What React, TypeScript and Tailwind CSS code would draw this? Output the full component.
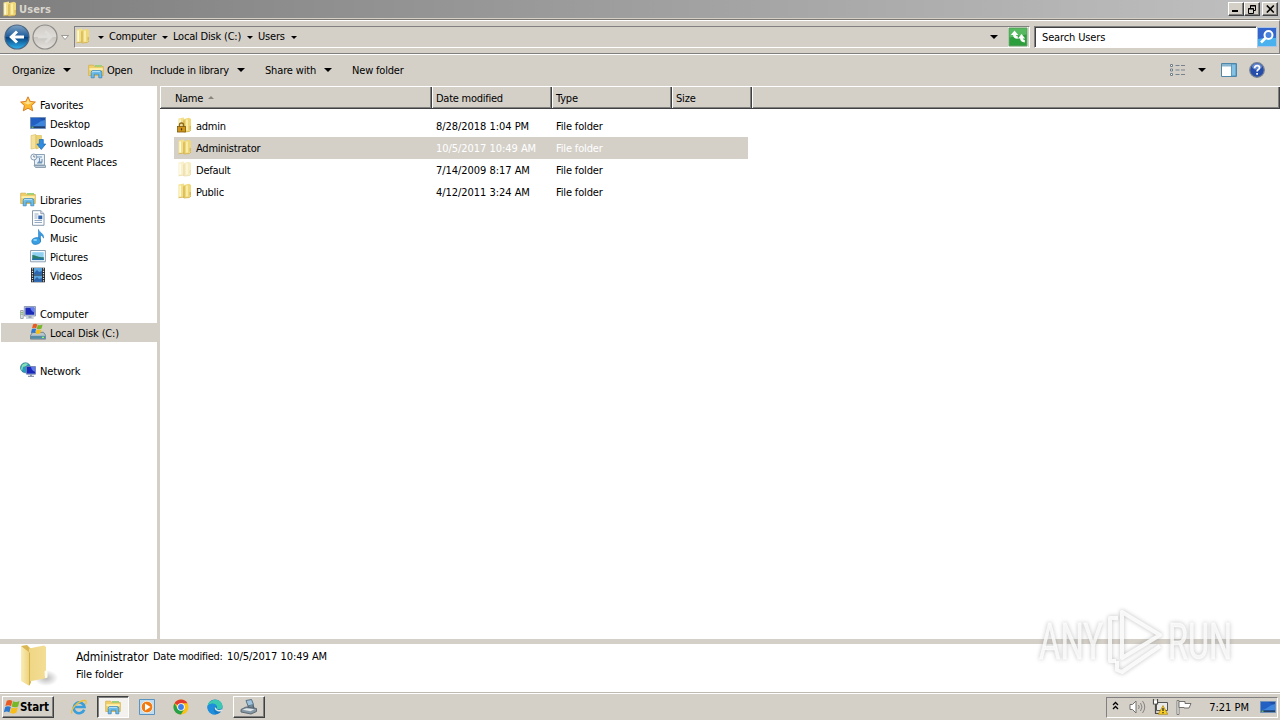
import React from 'react'
import clsx from 'clsx'

interface IconProps {
  className?: string
}

function Folder({ className }: IconProps) {
  return (
    <svg viewBox="0 0 16 16" className={clsx('h-4 w-4 shrink-0', className)}>
      <path d="M1.500 1.500 7 .5V14l-5.500.8z" fill="#f3e08f" />
      <path d="M6 2.200 12 .8l2 1.200v11L12.500 14.500 6 15z" fill="#eed879" />
      <path d="M6.200 3.500 7.700 3V14.500l-1.500.7z" fill="#d9b955" />
      <path d="M3.200 2.400v11" stroke="#fffad6" strokeWidth="1.600" />
      <path d="M10 2.600v11" stroke="#f9eba8" strokeWidth="2" />
      <path d="M1.500 14.800 7 14M7 15l5.500-.5 1.500-1.500" fill="none" stroke="#d2b04e" strokeWidth=".8" />
      <path d="M13.200 9v3.500" stroke="#cfac4a" strokeWidth="1" />
    </svg>
  )
}

function LockedFolder() {
  return (
    <span className="relative h-4 w-4 shrink-0">
      <Folder />
      <svg viewBox="0 0 16 16" className="absolute inset-0 h-4 w-4">
        <path d="M2.500 10V8a2 2 0 0 1 4 0v2" fill="none" stroke="#8c6b1c" strokeWidth="1.400" />
        <rect x=".5" y="9.500" width="8" height="5.500" fill="#cf951c" stroke="#7d5a10" strokeWidth=".8" />
        <path d="M4.500 11.300v2" stroke="#4a3408" strokeWidth="1.200" />
      </svg>
    </span>
  )
}

function Star() {
  return (
    <svg viewBox="0 0 16 16" className="h-4 w-4 shrink-0">
      <path
        d="M8 .8 10.2 5.4 15.4 6 11.6 9.5 12.7 14.8 8 12.2 3.3 14.8 4.4 9.5.6 6 5.8 5.4z"
        fill="#fbb930"
        stroke="#d6751b"
        strokeWidth=".9"
      />
      <path d="M8 2.8 9.4 6.2 13 6.6 8 8.5 3 6.6 6.6 6.2z" fill="#ffe391" />
    </svg>
  )
}

function Desktop({ className }: IconProps) {
  return (
    <svg viewBox="0 0 16 16" className={clsx('h-4 w-4 shrink-0', className)}>
      <path d="M.5 2.5h15v11H.5z" fill="#2260c4" stroke="#6d8fb8" strokeWidth=".9" />
      <path d="M1 3h7c5 2 6 4 7 4V3z" fill="#1d4fa8" />
      <path d="M1 11C6 11 9 6 15 5v6z" fill="#3d86dc" />
      <path d="M1 11.5h14V13H1z" fill="#274165" />
      <path d="M1.5 12.2h2" stroke="#8ce06a" />
    </svg>
  )
}

function Downloads() {
  return (
    <svg viewBox="0 0 16 16" className="h-4 w-4 shrink-0">
      <path d="M1 1.5 6 .5V14l-5 1z" fill="#f5e29a" stroke="#d8bd68" strokeWidth=".6" />
      <path d="M6 1.5h5.5V13L6 15z" fill="#ecd275" stroke="#d8b85a" strokeWidth=".6" />
      <path d="M9.3 5.500h4V10h2.400L11.3 15.500 6.900 10h2.400z" fill="#2f8de0" stroke="#1767b0" strokeWidth=".7" />
    </svg>
  )
}

function RecentPlaces() {
  return (
    <svg viewBox="0 0 16 16" className="h-4 w-4 shrink-0">
      <path d="M4.5 1.5h10v10.5h-10z" fill="#e8f0f7" stroke="#8197ac" strokeWidth=".9" />
      <path d="M4 12.5h11.5v2H5.5z" fill="#c0ced9" stroke="#7890a4" strokeWidth=".8" />
      <path d="M7 4h5M7 10h5M9.5 5v4M12 6v3H8" fill="none" stroke="#7193b5" strokeWidth="1.1" />
      <circle cx="3.8" cy="4" r="3" fill="#f3f7fa" stroke="#7b93ab" strokeWidth=".9" />
      <path d="M3.8 2.3V4h1.5" fill="none" stroke="#506780" strokeWidth=".8" />
    </svg>
  )
}

function LibraryIcon({ className }: IconProps) {
  return (
    <svg viewBox="0 0 16 16" className={clsx('h-4 w-4 shrink-0', className)}>
      <path d="M.7 12.5V2.2h5l1 1.3h8.6v9z" fill="#f0cf68" stroke="#d3b050" strokeWidth=".8" />
      <path d="M7 2h7v1.8H7z" fill="#9bd17a" />
      <path d="M1.5 5.2h13.2v2H1.5z" fill="#fff0b0" />
      <path d="M3.2 14.8V9.5Q3.2 7.6 5 7.6h7q1.8 0 1.8 1.9v5.3h-3v-3.6H6.2v3.6z" fill="#6cbce9" stroke="#3786bd" strokeWidth=".8" />
      <path d="M4 9.4q0-1 1-1h7" fill="none" stroke="#d0efff" strokeWidth=".8" />
    </svg>
  )
}

function DocumentIcon() {
  return (
    <svg viewBox="0 0 16 16" className="h-4 w-4 shrink-0">
      <path d="M2.5.7h8.3l3.2 3v11.6H2.5z" fill="#fdfdfe" stroke="#7b8ea3" strokeWidth=".9" />
      <path d="M10.8.7v3H14" fill="#dbe5ee" stroke="#7b8ea3" strokeWidth=".8" />
      <path d="M4.5 4h4M4.5 6h3M4.5 8h3M4.5 10.5h7.5M4.5 12.5h7.5" stroke="#8ba0ba" strokeWidth=".9" />
      <path d="M8.3 5.5h4v3.7h-4z" fill="#2e65ae" />
    </svg>
  )
}

function Music() {
  return (
    <svg viewBox="0 0 16 16" className="h-4 w-4 shrink-0">
      <path d="M8.500.4c.4 3 6 4 5 8.800-.6-2.200-2-2.800-3-3v6.300H8.500z" fill="#369be0" stroke="#176fb8" strokeWidth=".5" />
      <ellipse cx="6.200" cy="12" rx="4.400" ry="3.300" transform="rotate(-12 6.200 12)" fill="#389fe2" stroke="#1974ba" strokeWidth=".6" />
      <ellipse cx="5.200" cy="11.100" rx="2" ry="1" fill="#91d3fa" />
    </svg>
  )
}

function Pictures() {
  return (
    <svg viewBox="0 0 16 16" className="h-4 w-4 shrink-0">
      <path d="M.6 2.5h14.8v11.3H.6z" fill="#fbfcfd" stroke="#8195aa" strokeWidth=".9" />
      <path d="M2.3 4.2h11.4v7.9H2.3z" fill="#8fd0f1" />
      <path d="M2.3 7c3 0 6 3 11.4 2v3.1H2.3z" fill="#2a7d68" />
      <path d="M2.3 10.5h11.4v1.6H2.3z" fill="#2470ae" />
    </svg>
  )
}

function Videos() {
  return (
    <svg viewBox="0 0 16 16" className="h-4 w-4 shrink-0">
      <path d="M1 .7h14v14.6H1z" fill="#252b31" />
      <path d="M4 1h8v6.4H4zM4 8.4h8v6.4H4z" fill="#5ba5df" />
      <path d="M4 6 7 3l2 2 3-1v3.4H4zM4 13l3-3 2 2 3-1v3.8H4z" fill="#2d66ae" />
      <path d="M2.5 1.3v14M13.5 1.3v14" stroke="#e6ebee" strokeWidth="1.2" strokeDasharray="1.2 1.2" />
    </svg>
  )
}

function ComputerIcon() {
  return (
    <svg viewBox="0 0 16 16" className="h-4 w-4 shrink-0">
      <path d="M.6 5.5h2.6v8H.6z" fill="#dfe5e6" stroke="#7d8b8b" strokeWidth=".7" />
      <path d="M1 7.5h2M1 9.2h2" stroke="#70b554" strokeWidth=".8" />
      <path d="M4.3 1.500h11.2v9.500H4.3z" fill="#d4dce8" stroke="#7788a5" strokeWidth=".8" />
      <path d="M5.4 2.6h9v7.200h-9z" fill="#1b2bb8" />
      <path d="M10 2.6h4.4v5C12 7 11 5 10 2.6z" fill="#647ced" />
      <path d="M8.5 11h3v1.4h2.2v1.1H6v-1.1h2.5z" fill="#98a7b8" />
    </svg>
  )
}

function WindowsFlag({ className }: IconProps) {
  return (
    <svg viewBox="0 0 16 16" className={clsx('shrink-0', className)}>
      <path d="M2.800 1.700C5 .4 6.600.8 8.300 1.900L7 7.200C5.2 6.100 3.600 6 1.400 7z" fill="#e85a23" />
      <path d="M9 2.200c2 1.100 4 1.100 6.500-.1l-1.400 5.300c-2.300 1.100-4.300 1.100-6.400.1z" fill="#76b82a" />
      <path d="M1.200 7.900c2.200-1.100 3.900-.9 5.600.2l-1.400 5.300c-1.700-1.100-3.300-1.200-5.600-.1z" fill="#2c78cf" />
      <path d="M7.500 8.500c2 1.100 4 1.100 6.300 0l-1.400 5.300c-2.200 1.100-4.200 1.100-6.300 0z" fill="#f8bd18" />
    </svg>
  )
}

function LocalDisk() {
  return (
    <span className="relative h-4 w-4 shrink-0">
      <svg viewBox="0 0 16 16" className="h-4 w-4">
        <path d="m2.5 8.5 11-.2 2.2 3v3.8H.5v-3.7z" fill="#b7c5cc" stroke="#61747f" strokeWidth=".8" />
        <path d="M.8 11.8h14.6v3H.8z" fill="#568ba5" />
        <path d="M12 13.4h2" stroke="#8dfb74" strokeWidth="1.2" />
      </svg>
      <WindowsFlag className="absolute left-[1px] top-[-1px] h-[12px] w-[12px]" />
    </span>
  )
}

function NetworkIcon() {
  return (
    <svg viewBox="0 0 16 16" className="h-4 w-4 shrink-0">
      <circle cx="5.5" cy="5.8" r="5" fill="#2b97bb" stroke="#1a667e" strokeWidth=".6" />
      <path d="M2 3c2-2 5-2 6-1L6 4 3 5 2 9 1 7z" fill="#86dfb2" />
      <path d="M6.5 4.5h9v7.7h-9z" fill="#aab8dc" stroke="#6272a8" strokeWidth=".8" />
      <path d="M7 5h8v6.600H7z" fill="#1928ba" />
      <path d="M11 5h4v4.700C12 9 11.5 7 11 5z" fill="#5d78e8" />
      <path d="M10 12.2h2v1.5h2v1.2H8v-1.2h2z" fill="#8998b0" />
    </svg>
  )
}

function Caret({ className }: IconProps) {
  return (
    <svg viewBox="0 0 8 4" className={clsx('h-1 w-2 shrink-0', className)}>
      <path d="M0 0h8L4 4z" fill="#000" />
    </svg>
  )
}

function SmallCaret({ className }: IconProps) {
  return (
    <svg viewBox="0 0 6 3" className={clsx('h-[3px] w-[6px] shrink-0', className)}>
      <path d="M0 0h6L3 3z" fill="#000" />
    </svg>
  )
}

function NavArrow({ forward }: { forward?: boolean }) {
  return (
    <svg viewBox="0 0 26 26" className="h-[26px] w-[26px] shrink-0">
      <defs>
        <linearGradient id={forward ? 'fwd' : 'back'} x1="0" y1="0" x2="0" y2="1">
          <stop offset="0" stopColor={forward ? '#cfccc7' : '#7fa3c4'} />
          <stop offset=".48" stopColor={forward ? '#dedbd6' : '#1f5d9c'} />
          <stop offset=".52" stopColor={forward ? '#c9c6c0' : '#07427f'} />
          <stop offset="1" stopColor={forward ? '#e6e3df' : '#2fb4ef'} />
        </linearGradient>
      </defs>
      <circle cx="13" cy="13" r="12" fill={forward ? 'url(#fwd)' : 'url(#back)'} stroke={forward ? '#8d8b88' : '#4c6682'} strokeWidth="1.2" />
      {forward ? (
        <path d="M6 13h13M13.5 7.5 19 13l-5.5 5.500" fill="none" stroke="#dfddd9" strokeWidth="2.600" />
      ) : (
        <path d="M20 13H8M13 7.5 7.3 13l5.7 5.5" fill="none" stroke="#fff" strokeWidth="3" />
      )}
    </svg>
  )
}

function WindowButton({ children, className }: { children: React.ReactNode; className?: string }) {
  return (
    <button
      className={clsx(
        'flex h-[14px] w-4 items-center justify-center border border-b-[#404040] border-l-white border-r-[#404040] border-t-white bg-[#d4d0c8] shadow-[inset_-1px_-1px_0_#808080]',
        className,
      )}
    >
      {children}
    </button>
  )
}

function TitleBar() {
  return (
    <div className="flex h-[18px] items-center bg-linear-to-r from-[#7f7f7f] to-[#c0c0c0] pl-[2px] pr-[2px]">
      <Folder className="mr-px" />
      <span className="pt-[2px] text-[11px] font-bold tracking-[0.1px] text-[#d9d5cd]">Users</span>
      <div className="ml-auto flex">
        <WindowButton>
          <svg viewBox="0 0 10 8" className="h-2 w-[10px]">
            <path d="M1 5h6v2H1z" />
          </svg>
        </WindowButton>
        <WindowButton>
          <svg viewBox="0 0 10 9" className="h-[9px] w-[10px]">
            <path d="M3.5 3V.5h5v5H6.5M3 1h6M1.500 3.500h5v5h-5zM1 4h6" fill="none" stroke="#000" />
          </svg>
        </WindowButton>
        <WindowButton className="ml-[2px]">
          <svg viewBox="0 0 9 8" className="h-2 w-[9px]">
            <path d="m.8.5 7 7m0-7-7 7" stroke="#000" strokeWidth="1.6" />
          </svg>
        </WindowButton>
      </div>
    </div>
  )
}

function AddressBar() {
  return (
    <div className="flex h-[36px] items-center border-b border-t border-b-white border-t-[#7c7872] text-[11px]">
      <div className="flex h-[34px] w-full items-center border-b border-r border-t border-b-[#808080] border-r-[#808080] border-t-white pl-1">
        <NavArrow />
        <span className="ml-[2px] flex">
          <NavArrow forward />
        </span>
        <svg viewBox="0 0 8 5" className="ml-[3px] h-[5px] w-2">
          <path d="M.5.5h7L4 4.500z" fill="#fff" stroke="#8a8782" strokeWidth=".8" />
        </svg>
        <div className="ml-[5px] flex h-[22px] w-[956px] items-center border border-b-white border-l-[#808080] border-r-white border-t-[#808080]">
          <Folder className="-mt-[3px]" />
          <SmallCaret className="ml-[7px]" />
          <span className="ml-[5px] w-[47px] tracking-[-0.24px]">Computer</span>
          <SmallCaret className="ml-[6px]" />
          <span className="ml-[5px] w-[69px] whitespace-nowrap tracking-[-0.2px]">Local Disk (C:)</span>
          <SmallCaret className="ml-[5px]" />
          <span className="ml-[5px] w-[28px] tracking-[-0.2px]">Users</span>
          <SmallCaret className="ml-[5px]" />
          <Caret className="ml-auto" />
          <svg viewBox="0 0 20 20" className="ml-[10px] mr-px h-5 w-5">
            <path d="M0 0h20v20H0z" fill="#eef1e8" />
            <path d="M1 1h18v18H1z" fill="#2d9e3c" stroke="#6e9f6e" />
            <path d="M1.500 1.500h17v6l-17 3z" fill="#58ba60" />
            <path d="M6.500 3.500 2.800 8h2.300q.2 4 4.700 3.800V9.200Q8 9.300 7.900 8h2.300zM13.500 7 9.800 11.500h2.300q0 3.500 4.700 4V13q-2-.2-1.900-1.500h2.300z" fill="#fff" />
          </svg>
        </div>
        <div className="ml-1 flex h-[22px] w-[223px] items-center border border-b-white border-l-[#808080] border-r-white border-t-[#808080] bg-white pl-[7px] pt-[2px] shadow-[inset_1px_1px_0_#404040]">
          <span className="tracking-[-0.14px]">Search Users</span>
        </div>
        <svg viewBox="0 0 20 20" className="h-5 w-5">
          <path d="M.5.5h19v19H.5z" fill="#2e73d6" stroke="#aac5e6" />
          <path d="M1 11h18v8H1z" fill="#49b1ee" />
          <path d="M1 1h18v8L1 12z" fill="#3365cc" />
          <circle cx="11.500" cy="8" r="4" fill="#4a83de" stroke="#fff" strokeWidth="2" />
          <path d="m8.500 11-4.500 4.500" stroke="#fff" strokeWidth="2.600" />
        </svg>
      </div>
    </div>
  )
}

function Toolbar() {
  return (
    <div className="flex h-[31px] items-center pl-3 pr-[15px] text-[11px] tracking-[-0.24px]">
      <span className="w-[44px] pt-px tracking-[-0.16px]">Organize</span>
      <Caret className="mb-px ml-[7px]" />
      <LibraryIcon className="ml-[17px]" />
      <span className="ml-[3px] w-[26px] pt-px">Open</span>
      <span className="ml-[17px] w-[80px] whitespace-nowrap pt-px">Include in library</span>
      <Caret className="mb-px ml-[7px]" />
      <span className="ml-5 w-[52px] whitespace-nowrap pt-px tracking-[-0.16px]">Share with</span>
      <Caret className="mb-px ml-[7px]" />
      <span className="ml-5 pt-px tracking-[-0.18px]">New folder</span>
      <svg viewBox="0 0 16 12" className="mb-px ml-auto h-3 w-4">
        <path d="M.5.5h2v2h-2zM.5 5h2v2h-2zM.5 9.500h2v2h-2z" fill="#fff" stroke="#6e7f88" />
        <path d="M5.500 1.500h4M5.500 6h4M5.500 10.500h4M11 1.500h4M11 6h4M11 10.500h4" stroke="#77838c" />
      </svg>
      <Caret className="mb-px ml-3" />
      <svg viewBox="0 0 16 14" className="mb-px ml-[15px] h-[14px] w-4">
        <path d="M.5.5h15v13H.5z" fill="#fff" stroke="#4f86a8" />
        <path d="M1 1h9v2.500H1z" fill="#88b5cf" />
        <path d="M10.500 1H15v12h-4.500z" fill="#83c2e5" stroke="#4789b1" strokeWidth=".8" />
      </svg>
      <svg viewBox="0 0 16 16" className="mb-px ml-3 h-4 w-4">
        <circle cx="8" cy="8" r="7.300" fill="#274dab" stroke="#788292" strokeWidth="1.200" />
        <ellipse cx="8" cy="4.600" rx="5" ry="3" fill="#6487d1" />
        <path d="M5.600 6.200q0-2.500 2.500-2.500 2.400 0 2.400 2 0 1.300-1.400 2-1 .6-1 1.700M8.100 11v1.700" fill="none" stroke="#fff" strokeWidth="1.700" />
      </svg>
    </div>
  )
}

interface NavItem {
  label: string
  icon: React.ReactNode
  child?: boolean
  selected?: boolean
}

const navGroups: NavItem[][] = [
  [
    { label: 'Favorites', icon: <Star /> },
    { label: 'Desktop', icon: <Desktop />, child: true },
    { label: 'Downloads', icon: <Downloads />, child: true },
    { label: 'Recent Places', icon: <RecentPlaces />, child: true },
  ],
  [
    { label: 'Libraries', icon: <LibraryIcon /> },
    { label: 'Documents', icon: <DocumentIcon />, child: true },
    { label: 'Music', icon: <Music />, child: true },
    { label: 'Pictures', icon: <Pictures />, child: true },
    { label: 'Videos', icon: <Videos />, child: true },
  ],
  [
    { label: 'Computer', icon: <ComputerIcon /> },
    { label: 'Local Disk (C:)', icon: <LocalDisk />, child: true, selected: true },
  ],
  [{ label: 'Network', icon: <NetworkIcon /> }],
]

function Sidebar() {
  return (
    <nav className="flex w-[160px] shrink-0 flex-col gap-[19px] border-r-[3px] border-[#d4d0c8] bg-white pl-px pt-[9px]">
      {navGroups.map((group) => (
        <div key={group[0].label}>
          {group.map((item) => (
            <div
              key={item.label}
              className={clsx(
                'flex h-[19px] items-start gap-1 text-[11px] tracking-[-0.14px]',
                item.child ? 'pl-[29px]' : 'pl-[19px]',
                item.selected && 'bg-[#d4d0c8]',
              )}
            >
              <span className="flex pt-px">{item.icon}</span>
              <span className="pt-[2px] leading-[18px]">{item.label}</span>
            </div>
          ))}
        </div>
      ))}
    </nav>
  )
}

const files = [
  { name: 'admin', date: '8/28/2018 1:04 PM', icon: <LockedFolder /> },
  { name: 'Administrator', date: '10/5/2017 10:49 AM', icon: <Folder />, selected: true },
  { name: 'Default', date: '7/14/2009 8:17 AM', icon: <Folder className="opacity-45" /> },
  { name: 'Public', date: '4/12/2011 3:24 AM', icon: <Folder /> },
]

const headerCell =
  'flex h-full items-center border-l border-r border-l-white border-r-[#404040] pt-[3px] shadow-[inset_-1px_0_0_#808080]'

function FileList() {
  return (
    <main className="flex-1 bg-white text-[11px] tracking-[-0.16px]">
      <div className="flex h-[23px] items-center border-b border-t border-b-[#404040] border-t-white bg-[#d4d0c8] shadow-[inset_0_-1px_0_#808080]">
        <div className={clsx(headerCell, 'w-[272px] pl-[14px] tracking-[-0.3px]')}>
          Name
          <svg viewBox="0 0 6 3" className="mb-[4px] ml-[5px] h-[3px] w-[6px]">
            <path d="M0 3h6L3 0z" fill="#88847d" />
          </svg>
        </div>
        <div className={clsx(headerCell, 'w-[120px] pl-[3px] tracking-[-0.25px]')}>Date modified</div>
        <div className={clsx(headerCell, 'w-[120px] pl-[3px]')}>Type</div>
        <div className={clsx(headerCell, 'w-[80px] pl-[3px]')}>Size</div>
        <div className={clsx(headerCell, 'flex-1')} />
      </div>
      <div className="pl-[14px] pt-[6px]">
        {files.map((file) => (
          <div
            key={file.name}
            className={clsx('flex h-[22px] w-[574px] items-center pl-[3px]', file.selected && 'bg-[#d4d0c8]')}
          >
            <span className="flex pb-[2px]">{file.icon}</span>
            <span className="ml-[3px] w-[240px] pt-[2px] tracking-[-0.24px]">{file.name}</span>
            <span className={clsx('w-[120px] pt-[2px] tracking-[-0.04px]', file.selected && 'text-white')}>{file.date}</span>
            <span className={clsx('pt-[2px]', file.selected && 'text-white')}>File folder</span>
          </div>
        ))}
      </div>
    </main>
  )
}

function DetailsPane() {
  return (
    <div className="flex h-[54px] border-b border-t-[5px] border-b-[#bebab2] border-t-[#d4d0c8] bg-white pl-[19px]">
      <svg viewBox="0 0 40 44" className="h-[44px] w-10">
        <defs>
          <linearGradient id="cover" x1="0" x2="1">
            <stop offset="0" stopColor="#efd685" />
            <stop offset="1" stopColor="#f3de96" />
          </linearGradient>
          <linearGradient id="flap" x1="0" x2="1">
            <stop offset="0" stopColor="#f9edb8" />
            <stop offset="1" stopColor="#ecd27c" />
          </linearGradient>
          <radialGradient id="folderShadow">
            <stop offset="0" stopColor="#8a8a8a" stopOpacity=".6" />
            <stop offset="1" stopColor="#8a8a8a" stopOpacity="0" />
          </radialGradient>
        </defs>
        <ellipse cx="27" cy="34" rx="12" ry="8" fill="url(#folderShadow)" />
        <path d="M2 2 8 1l4 4v34l-2 2z" fill="#d9b651" />
        <path d="M10 4.500 25 1.500l2 1.500V26l1 8-18 3.500z" fill="url(#cover)" />
        <path d="m2 2 8.500 6.500V42L2 37z" fill="url(#flap)" />
        <path d="M10.500 8.500V41" stroke="#cda743" strokeWidth=".8" />
        <path d="M25.500 27.500q3-3 3 0v6l-2.500.8z" fill="#fffdf0" />
      </svg>
      <div className="ml-[17px] pt-1 text-[11px] leading-[18px] tracking-[-0.1px]">
        <div className="flex">
          <span className="w-[77px] text-[12px]">Administrator</span>
          <span className="w-[74px] whitespace-nowrap tracking-[-0.28px]">Date modified:</span>
          <span className="tracking-[-0.04px]">10/5/2017 10:49 AM</span>
        </div>
        <div className="tracking-[-0.14px]">File folder</div>
      </div>
    </div>
  )
}

const raised =
  'border border-b-[#404040] border-l-white border-r-[#404040] border-t-white shadow-[inset_-1px_-1px_0_#808080]'

function Taskbar() {
  return (
    <div className="flex h-[27px] items-center border-t border-white pl-[2px] pr-[2px]">
      <button className={clsx('flex h-[22px] w-[52px] items-center pl-px', raised)}>
        <WindowsFlag className="h-4 w-4" />
        <span className="pt-[2px] text-[11.5px] font-bold tracking-[-0.1px]">Start</span>
      </button>
      <svg viewBox="0 0 16 16" className="ml-[17px] h-4 w-4">
        <path d="M13.200 10.800A5.400 5.400 0 1 1 13.500 8H4" fill="none" stroke="#3a9edc" strokeWidth="2.600" />
        <path d="M1 14.500C-1 11 7 1 14.500 1.500q1.500 1 0 4" fill="none" stroke="#ecc03b" strokeWidth="1.300" />
      </svg>
      <button className="ml-[10px] flex h-[22px] w-8 items-center justify-center border border-b-white border-l-[#404040] border-r-white border-t-[#404040] bg-[#f4f2ef] shadow-[inset_1px_1px_0_#808080]">
        <LibraryIcon />
      </button>
      <svg viewBox="0 0 16 16" className="ml-[10px] h-4 w-4">
        <path d="M.5.5h15v15H.5z" fill="#bfdcf1" stroke="#5894c2" />
        <circle cx="8" cy="8" r="5.800" fill="#f17b12" stroke="#fff2dc" strokeWidth=".8" />
        <path d="m6 4.500 5.500 3.500L6 11.500z" fill="#fff" />
      </svg>
      <svg viewBox="0 0 16 16" className="ml-[18px] h-4 w-4">
        <circle cx="8" cy="8" r="7.500" fill="#fbc116" />
        <path d="M8 8 1.500 4.250A7.500 7.500 0 0 1 14.500 4.250H8z" fill="#e33b2e" />
        <path d="M1.500 4.250A7.500 7.500 0 0 0 8 15.500L11.200 9.900 4.700 9.800z" fill="#26a149" />
        <circle cx="8" cy="8" r="3.800" fill="#fff" />
        <circle cx="8" cy="8" r="2.900" fill="#3f7fe9" />
      </svg>
      <svg viewBox="0 0 16 16" className="ml-[18px] h-4 w-4">
        <circle cx="8" cy="8" r="7.600" fill="#167cc9" />
        <path d="M.6 7C1.500-1 15-2 15.600 7.500c0 3-3.800 3.400-6 2.300C12 6 5 2 .6 7z" fill="#3cc8b1" />
        <path d="M.6 7C3 3.500 9 3.500 9.600 7.500 6 6.800 5.500 12 9 15.400 4 16.500-.2 12 .6 7z" fill="#1f8fdd" />
        <path d="M8.200 8.600c.5 3 4.200 4.200 7 2.400" fill="none" stroke="#e1e7e4" strokeWidth="1.500" />
      </svg>
      <button className={clsx('ml-[10px] flex h-[22px] w-8 items-center justify-center', raised)}>
        <svg viewBox="0 0 18 16" className="h-4 w-[18px]">
          <path d="M6 1.500 11.500.5 13.500 5.500 8 7z" fill="#9fc3dc" stroke="#4d687b" strokeWidth=".9" />
          <path d="M8.500 7 7 9.500h7L13 6" fill="#6f8597" stroke="#4d6172" strokeWidth="1.200" />
          <path d="m1 10.500 5-2.500 10.500 1.500v3L11 15 1 13z" fill="#8796a3" stroke="#55626c" strokeWidth=".9" />
          <path d="m2.500 10.800 4-1.600 8 1-4 2z" fill="#dee6ea" />
        </svg>
      </button>

      <div className="ml-auto flex h-[21px] w-[172px] items-center border border-b-white border-l-[#808080] border-r-white border-t-[#808080] pl-[5px] pr-px">
        <svg viewBox="0 0 7 9" className="mb-[3px] h-[9px] w-[7px]">
          <path d="m1 4 2.500-2.500L6 4M1 8l2.500-2.500L6 8" fill="none" stroke="#000" strokeWidth="1.300" />
        </svg>
        <svg viewBox="0 0 17 14" className="ml-[10px] h-[14px] w-[17px]">
          <path d="M1 4.500h2.500L7 1v12L3.500 9.500H1z" fill="#fff" stroke="#71716f" />
          <path d="M9.500 5q1.500 2 0 4M11.500 3q3 4 0 8M13.500 1q4.500 6 0 12" fill="none" stroke="#858482" />
        </svg>
        <svg viewBox="0 0 16 16" className="ml-[6px] h-4 w-4">
          <path d="M4.500 3.500h11v8h-11z" fill="#e9e9e7" stroke="#555" />
          <path d="M1.500 0v5h4V0M3.500 5v9.500H7" fill="none" stroke="#4c4c4a" strokeWidth="1.200" />
          <path d="M2 1.500h3v3H2z" fill="#fff" />
          <path d="m11 6.500 4.700 8.800H6.300z" fill="#f9ce25" stroke="#a98212" strokeWidth=".7" />
          <path d="M11 9v3M11 13v1.200" stroke="#222" strokeWidth="1.200" />
        </svg>
        <svg viewBox="0 0 16 15" className="ml-2 h-[15px] w-4">
          <path d="M1 .5h2v14H1z" fill="#fff" stroke="#666462" strokeWidth=".8" />
          <path d="M3 1.500h6v2h6l-2 4.500H8V7.500H3z" fill="#fff" stroke="#666462" strokeWidth=".9" />
        </svg>
        <span className="ml-auto mr-[11px] pt-[2px] text-[11px] tracking-[0px]">7:21 PM</span>
        <Desktop />
      </div>
    </div>
  )
}

function Watermark() {
  return (
    <svg viewBox="0 0 244 72" className="absolute left-[1032px] top-[604px] h-[72px] w-[244px] drop-shadow-[0_0_2px_rgba(90,90,90,0.45)]">
      <g fill="#fff" fillOpacity=".8" stroke="#fff" strokeOpacity=".6" strokeWidth=".8" fontFamily="Roboto, sans-serif" fontSize="50">
        <text x="7" y="55" textLength="64" lengthAdjust="spacingAndGlyphs">ANY</text>
        <text x="136" y="55" textLength="64" lengthAdjust="spacingAndGlyphs">RUN</text>
      </g>
      <g fill="none" stroke="#fff" strokeOpacity=".85" strokeWidth="4" strokeLinejoin="round">
        <path d="M86 14h-8v43h6" />
        <path d="M90 8v46l38-23z" />
        <path d="M85 57v9l5 2 38-26" />
      </g>
    </svg>
  )
}

export default function App() {
  return (
    <div className="relative flex h-[720px] w-[1280px] cursor-default select-none flex-col overflow-hidden bg-[#d4d0c8] font-['DejaVu_Sans_Condensed','DejaVu_Sans',sans-serif] text-black">
      <TitleBar />
      <div className="mt-px">
        <AddressBar />
      </div>
      <Toolbar />
      <div className="flex min-h-0 flex-1">
        <Sidebar />
        <FileList />
      </div>
      <DetailsPane />
      <Taskbar />
      <Watermark />
    </div>
  )
}
